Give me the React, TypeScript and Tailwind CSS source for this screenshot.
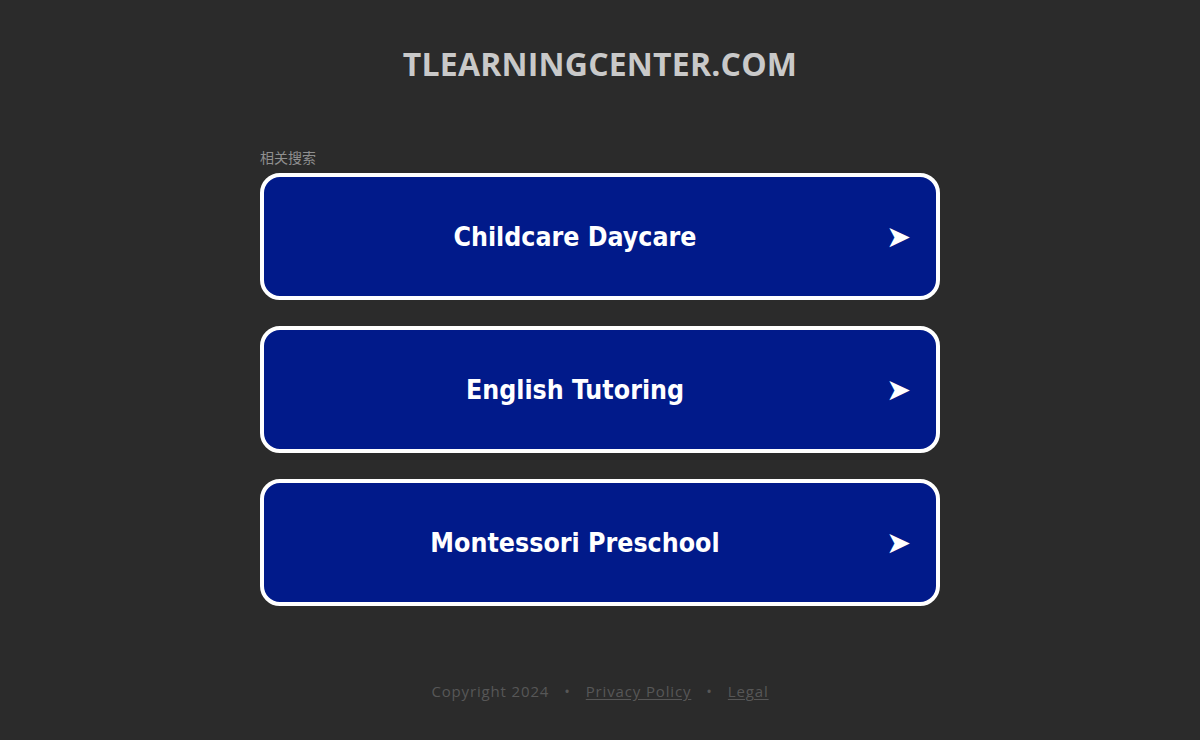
import React from 'react';

const links = ['Childcare Daycare', 'English Tutoring', 'Montessori Preschool'];

export default function App() {
  return (
    <div className="min-h-[740px] w-full bg-[#2b2b2b] flex flex-col items-center">
      <h1 className="mt-[44px] text-[32px] leading-[40px] font-bold text-[#c9c9c9] font-['Open_Sans',sans-serif] tracking-[0.2px]">
        TLEARNINGCENTER.COM
      </h1>

      <div className="mt-[64px] w-[680px]">
        <p className="text-[14px] leading-[18px] text-[#8f8f8f] font-['Noto_Sans_CJK_SC',sans-serif]">相关搜索</p>
        <div className="mt-[7px] flex flex-col gap-[26px]">
          {links.map((label) => (
            <a
              key={label}
              href="#"
              className="h-[127px] flex items-center rounded-[20px] border-[4px] border-white bg-[#011a8a] text-white"
            >
              <span className="flex-1 text-center text-[26.5px] font-bold font-['DejaVu_Sans_Condensed','DejaVu_Sans',sans-serif]">
                {label}
              </span>
              <span className="w-[22px] mr-[28px] text-[30px] leading-none font-['DejaVu_Sans',sans-serif]">➤</span>
            </a>
          ))}
        </div>
      </div>

      <footer className="mt-[74px] text-[15px] tracking-[0.85px] text-[#575757] font-['Open_Sans',sans-serif] flex items-center gap-[15px]">
        <span>Copyright 2024</span>
        <span>•</span>
        <a href="#" className="underline underline-offset-2">Privacy Policy</a>
        <span>•</span>
        <a href="#" className="underline underline-offset-2">Legal</a>
      </footer>
    </div>
  );
}
